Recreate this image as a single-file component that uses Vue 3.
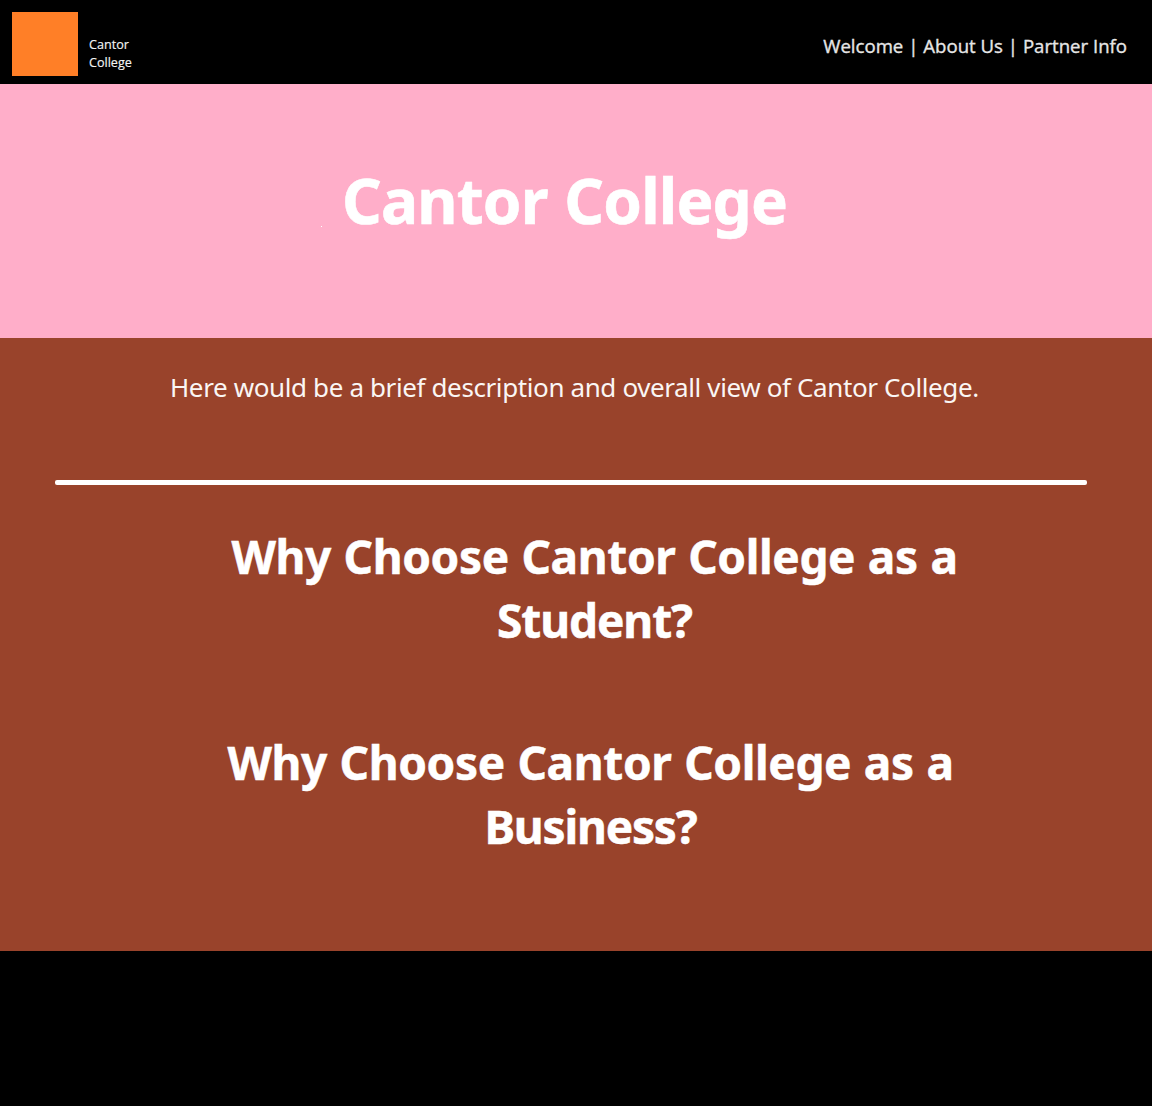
<script setup>
const links = ['Welcome', 'About Us', 'Partner Info']
const sections = [
  { id: 'student', lead: 'Why Choose Cantor College as a', last: 'Student?' },
  { id: 'business', lead: 'Why Choose Cantor College as a', last: 'Business?' }
]
</script>

<template>
  <div class="page">
    <header class="topbar">
      <div class="brand">
        <div class="logo"></div>
        <div class="brand-name">Cantor<br />College</div>
      </div>
      <nav class="nav">
        <template v-for="(link, i) in links" :key="link">
          <span v-if="i" class="bar">|</span>
          <a class="link">{{ link }}</a>
        </template>
      </nav>
    </header>

    <section class="hero">
      <h1>Cantor College</h1>
      <span class="speck"></span>
    </section>

    <main class="content">
      <p class="intro">Here would be a brief description and overall view of Cantor College.</p>
      <div class="rule"></div>
      <h2 v-for="s in sections" :key="s.id" :class="s.id">
        <span class="lead">{{ s.lead }}</span>
        <span class="last">{{ s.last }}</span>
      </h2>
    </main>

    <footer class="footer"></footer>
  </div>
</template>

<style>
body {
  margin: 0;
  background: #000;
}
</style>

<style scoped>
.page {
  display: flex;
  flex-direction: column;
  width: 1152px;
  height: 1106px;
  overflow: hidden;
  color: #fff;
  font-family: "Noto Sans", "Open Sans", sans-serif;
}
.topbar {
  display: flex;
  justify-content: space-between;
  align-items: flex-start;
  box-sizing: border-box;
  height: 84px;
  padding: 12px 25px 0 12px;
  background: #000;
  font-family: "Open Sans", sans-serif;
}
.brand {
  display: flex;
  gap: 11px;
}
.logo {
  width: 66px;
  height: 64px;
  background: #ff7f27;
}
.brand-name {
  padding-top: 24px;
  font-size: 12.6px;
  line-height: 18px;
  color: #f4f4f4;
  -webkit-text-stroke: 0.15px #f4f4f4;
}
.nav {
  display: flex;
  align-items: center;
  padding-top: 19px;
  font-size: 18.6px;
  line-height: 30px;
  color: #e6e6e6;
  -webkit-text-stroke: 0.35px #e6e6e6;
}
.link {
  white-space: nowrap;
}
.bar {
  width: 20px;
  text-align: center;
}
.hero {
  position: relative;
  box-sizing: border-box;
  height: 254px;
  padding: 74px 0 0 342px;
  background: #ffaec9;
}
h1 {
  margin: 0;
  font-size: 62px;
  line-height: 84px;
  font-weight: 700;
  letter-spacing: -0.85px;
  word-spacing: 1.5px;
  white-space: nowrap;
  -webkit-text-stroke: 0.6px #fff;
}
.speck {
  position: absolute;
  left: 321px;
  top: 142px;
  width: 1px;
  height: 1px;
  background: #fff;
}
.content {
  box-sizing: border-box;
  height: 613px;
  padding-top: 31px;
  background: #99432b;
}
.intro {
  margin: 0 0 0 170px;
  font-size: 26px;
  line-height: 36px;
  letter-spacing: -0.4px;
  word-spacing: 0.1px;
  color: #faf6f4;
  white-space: nowrap;
}
.rule {
  width: 1032px;
  height: 5px;
  margin: 75px 0 39px 55px;
  border-radius: 2px;
  background: #fff;
}
h2 {
  width: 760px;
  margin: 0 0 78px 214.5px;
  font-size: 46px;
  line-height: 64px;
  font-weight: 700;
  text-align: center;
  -webkit-text-stroke: 0.5px #fff;
}
h2.business {
  margin-left: 210.5px;
}
.lead,
.last {
  display: block;
  white-space: nowrap;
}
.lead {
  letter-spacing: -0.38px;
  word-spacing: 1.1px;
}
.last {
  letter-spacing: -1.1px;
}
.business .last {
  letter-spacing: -1.2px;
}
.footer {
  flex: 1;
  background: #000;
}
</style>
